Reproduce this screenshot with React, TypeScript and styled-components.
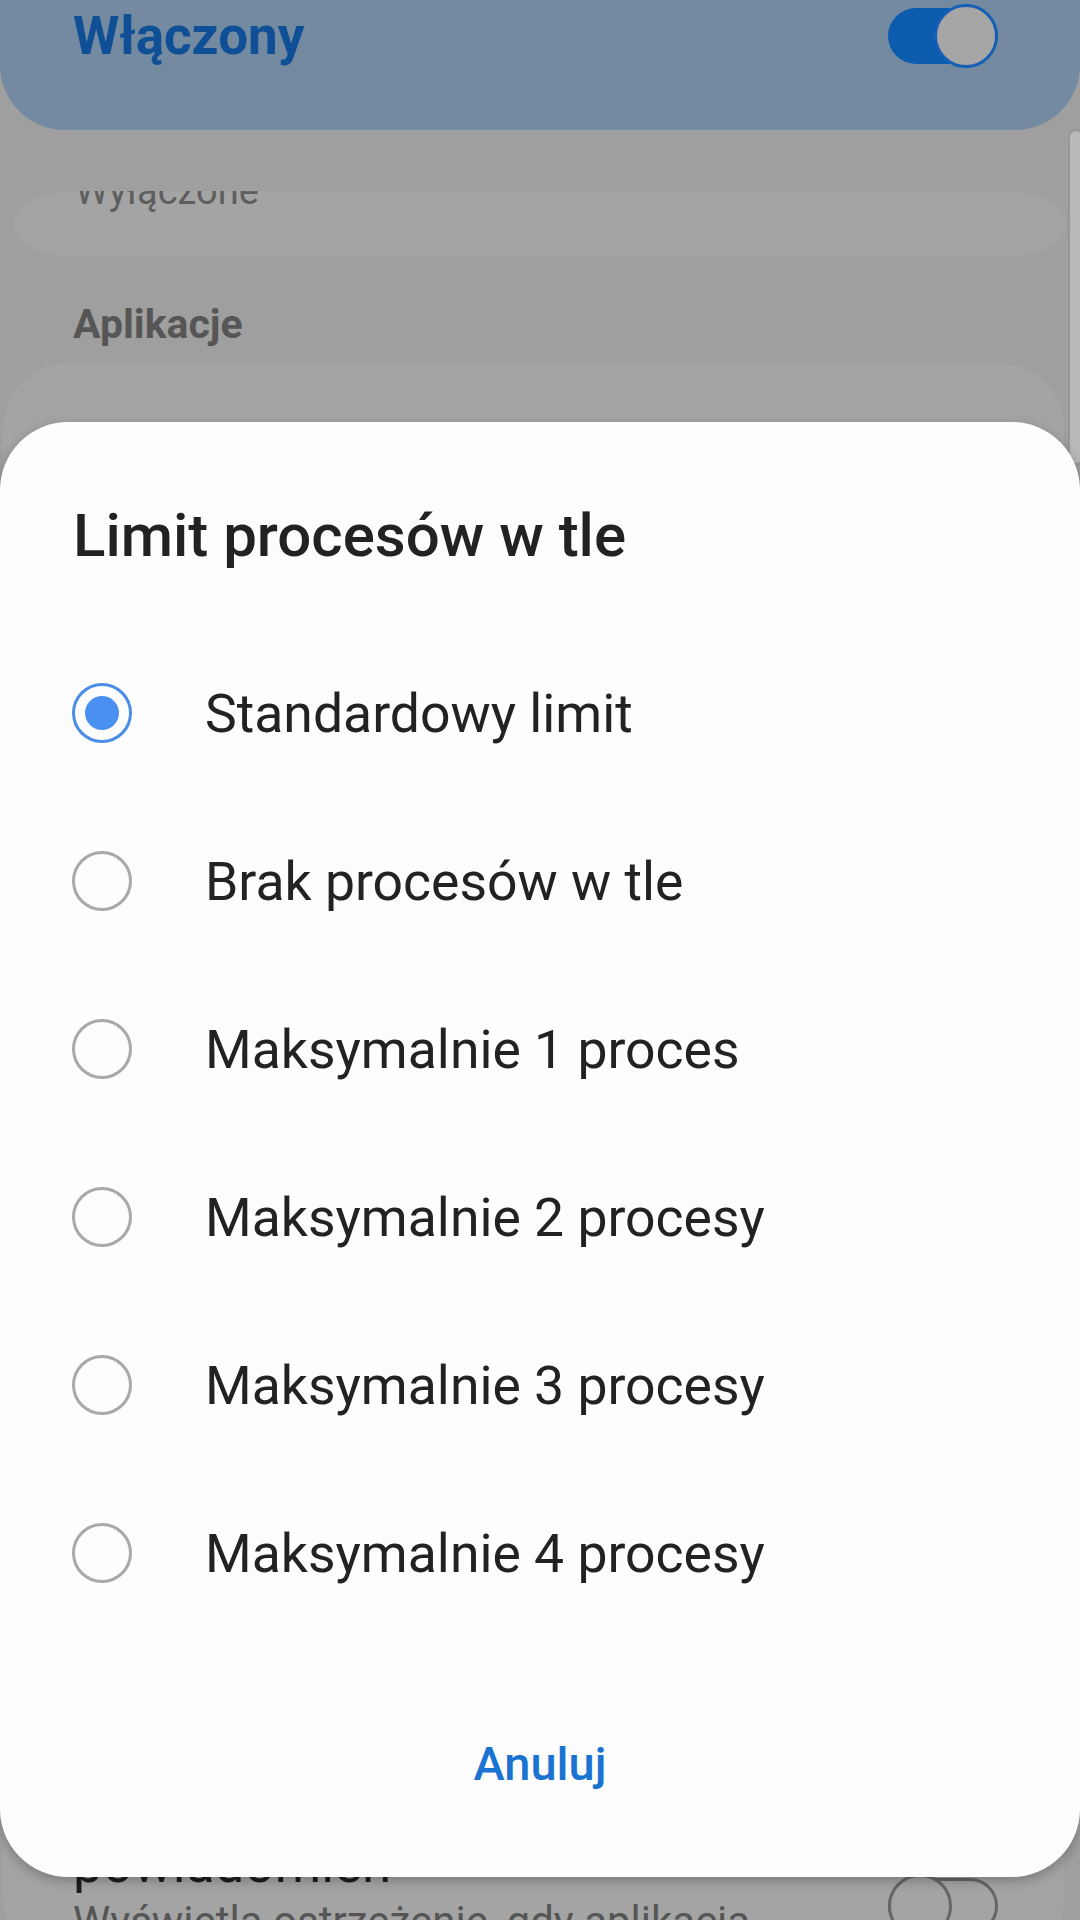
import React from "react"
import styled, { createGlobalStyle } from "styled-components"

const GlobalStyle = createGlobalStyle`
  body {
    margin: 0;
    background: #9f9f9f;
    font-family: Roboto, "Noto Sans", sans-serif;
    overflow: hidden;
  }
`

const Screen = styled.div`
  position: relative;
  width: 1080px;
  height: 1920px;
  overflow: hidden;
  display: flex;
  flex-direction: column;
  background: #9f9f9f;
  & > * {
    flex-shrink: 0;
  }
`

const TopCard = styled.div`
  height: 130px;
  box-sizing: border-box;
  padding: 0 82px 0 73px;
  background: #738aa1;
  border-radius: 0 0 65px 65px;
`

const CardRow = styled.div`
  height: 72px;
  display: flex;
  align-items: center;
  justify-content: space-between;
`

const MasterLabel = styled.span`
  font-size: 53px;
  font-weight: 700;
  color: #0f4f96;
`

const Switch = styled.div<{ $on?: boolean }>`
  position: relative;
  width: 110px;
  height: 64px;
  flex-shrink: 0;
  &::before {
    content: "";
    position: absolute;
    left: 0;
    top: 4px;
    width: 110px;
    height: 56px;
    box-sizing: border-box;
    border-radius: 28px;
    background: ${p => (p.$on ? "#0b5cad" : "transparent")};
    border: ${p => (p.$on ? "none" : "3px solid #666")};
  }
`

const Thumb = styled.span<{ $on?: boolean }>`
  position: absolute;
  top: 0;
  ${p => (p.$on ? "right: 0;" : "left: 0;")}
  width: 64px;
  height: 64px;
  box-sizing: border-box;
  border-radius: 50%;
  background: ${p => (p.$on ? "#a6a6a6" : "#a4a4a4")};
  border: 3px solid ${p => (p.$on ? "#1560b5" : "#666")};
`

const ClippedPill = styled.div`
  margin: 61px 13px 0 13px;
  height: 66px;
  box-sizing: border-box;
  padding-left: 62px;
  background: #a4a4a4;
  border-radius: 60px / 33px;
  overflow: hidden;
`

const PillText = styled.div`
  margin-top: -20px;
  font-size: 38px;
  line-height: 40px;
  color: #5e5e5e;
`

const SectionHeader = styled.div`
  margin-top: 42px;
  padding-left: 73px;
  font-size: 41px;
  font-weight: 700;
  line-height: 50px;
  color: #565656;
`

const ListCard = styled.div`
  margin: 14px 16px 0 3px;
  height: 1600px;
  box-sizing: border-box;
  padding: 0 66px 15px 70px;
  background: #a4a4a4;
  border-radius: 65px;
  display: flex;
  flex-direction: column;
  justify-content: flex-end;
`

const ItemRow = styled.div`
  display: flex;
  justify-content: space-between;
  align-items: flex-start;
`

const ItemTexts = styled.div`
  display: flex;
  flex-direction: column;
`

const ItemTitle = styled.div`
  font-size: 53px;
  line-height: 64px;
  color: #1c1c1c;
`

const ItemSub = styled.div`
  font-size: 42px;
  line-height: 52px;
  color: #555;
  white-space: nowrap;
`

const ItemSwitch = styled.div`
  margin-top: 42px;
`

const Scrollbar = styled.div`
  position: absolute;
  right: -4px;
  top: 129px;
  width: 16px;
  height: 336px;
  box-sizing: border-box;
  background: #b9b9b9;
  border: 2px solid #979797;
  border-radius: 10px;
`

const Dialog = styled.div`
  position: absolute;
  left: 0;
  top: 422px;
  width: 1080px;
  height: 1455px;
  box-sizing: border-box;
  padding-top: 79px;
  background: #fdfdfd;
  border-radius: 68px;
  box-shadow: 0 4px 12px rgba(0, 0, 0, 0.25);
  display: flex;
  flex-direction: column;
`

const DialogTitle = styled.h2`
  margin: 0;
  padding-left: 73px;
  font-size: 60px;
  font-weight: 500;
  line-height: 70px;
  color: #222;
`

const OptionList = styled.div`
  margin-top: 58px;
  display: flex;
  flex-direction: column;
`

const Option = styled.div`
  height: 168px;
  padding-left: 72px;
  display: flex;
  align-items: center;
  gap: 73px;
`

const Radio = styled.span<{ $checked?: boolean }>`
  width: 60px;
  height: 60px;
  box-sizing: border-box;
  border-radius: 50%;
  border: 3px solid ${p => (p.$checked ? "#4a8de6" : "#a8a8a8")};
  display: flex;
  align-items: center;
  justify-content: center;
  flex-shrink: 0;
  &::after {
    content: "";
    display: ${p => (p.$checked ? "block" : "none")};
    width: 34px;
    height: 34px;
    border-radius: 50%;
    background: #4a90f0;
  }
`

const OptionLabel = styled.span`
  font-size: 53.5px;
  color: #222;
`

const Footer = styled.div`
  margin-top: 97px;
  text-align: center;
`

const CancelButton = styled.span`
  font-size: 47px;
  font-weight: 500;
  line-height: 60px;
  color: #1a73d1;
`

const options = [
  "Standardowy limit",
  "Brak procesów w tle",
  "Maksymalnie 1 proces",
  "Maksymalnie 2 procesy",
  "Maksymalnie 3 procesy",
  "Maksymalnie 4 procesy",
]

export default function App() {
  return (
    <>
      <GlobalStyle />
      <Screen>
        <TopCard>
          <CardRow>
            <MasterLabel>Włączony</MasterLabel>
            <Switch $on>
              <Thumb $on />
            </Switch>
          </CardRow>
        </TopCard>
        <ClippedPill>
          <PillText>Wyłączone</PillText>
        </ClippedPill>
        <SectionHeader>Aplikacje</SectionHeader>
        <ListCard>
          <ItemRow>
            <ItemTexts>
              <ItemTitle>powiadomień</ItemTitle>
              <ItemSub>Wyświetla ostrzeżenie, gdy aplikacja</ItemSub>
            </ItemTexts>
            <ItemSwitch>
              <Switch>
                <Thumb />
              </Switch>
            </ItemSwitch>
          </ItemRow>
        </ListCard>
        <Scrollbar />

        <Dialog>
          <DialogTitle>Limit procesów w tle</DialogTitle>
          <OptionList>
            {options.map((o, i) => (
              <Option key={o}>
                <Radio $checked={i === 0} />
                <OptionLabel>{o}</OptionLabel>
              </Option>
            ))}
          </OptionList>
          <Footer>
            <CancelButton>Anuluj</CancelButton>
          </Footer>
        </Dialog>
      </Screen>
    </>
  )
}
